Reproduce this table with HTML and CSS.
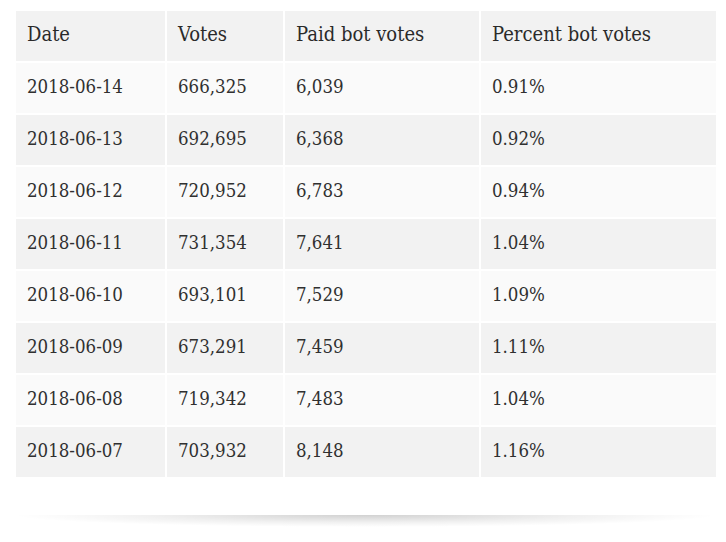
FILE: index.html
```html
<!DOCTYPE html>
<html>
<head>
<meta charset="utf-8">
<link rel="stylesheet" href="styles.css">
</head>
<body>
<div class="card">
  <table class="votes">
    <colgroup>
      <col class="c1"><col class="c2"><col class="c3"><col class="c4">
    </colgroup>
    <thead>
      <tr><th>Date</th><th>Votes</th><th>Paid bot votes</th><th>Percent bot votes</th></tr>
    </thead>
    <tbody>
      <tr><td>2018-06-14</td><td>666,325</td><td>6,039</td><td>0.91%</td></tr>
      <tr><td>2018-06-13</td><td>692,695</td><td>6,368</td><td>0.92%</td></tr>
      <tr><td>2018-06-12</td><td>720,952</td><td>6,783</td><td>0.94%</td></tr>
      <tr><td>2018-06-11</td><td>731,354</td><td>7,641</td><td>1.04%</td></tr>
      <tr><td>2018-06-10</td><td>693,101</td><td>7,529</td><td>1.09%</td></tr>
      <tr><td>2018-06-09</td><td>673,291</td><td>7,459</td><td>1.11%</td></tr>
      <tr><td>2018-06-08</td><td>719,342</td><td>7,483</td><td>1.04%</td></tr>
      <tr><td>2018-06-07</td><td>703,932</td><td>8,148</td><td>1.16%</td></tr>
    </tbody>
  </table>
</div>
<div class="shadow"></div>
</body>
</html>
```
FILE: styles.css
```css
html, body {
  margin: 0;
  padding: 0;
  background: #ffffff;
}
.card {
  padding: 9px 8px 0 14px;
  height: 515px;
  box-sizing: border-box;
}
.votes {
  border-collapse: separate;
  border-spacing: 2px;
  table-layout: fixed;
  width: 704px;
  font-family: "DejaVu Serif Condensed", "DejaVu Serif", serif;
  font-stretch: condensed;
  color: #303030;
}
.c1 { width: 149px; }
.c2 { width: 116px; }
.c3 { width: 194px; }
.c4 { width: 235px; }
.votes th, .votes td {
  height: 50px;
  padding: 0 0 4px 11px;
  text-align: left;
  vertical-align: middle;
  box-sizing: border-box;
  white-space: nowrap;
}
.votes th {
  font-size: 20px;
  font-weight: normal;
  background: #f2f2f2;
  color: #2a2a2a;
}
.votes td {
  font-size: 18.5px;
}
.votes tbody tr:nth-child(odd) td {
  background: #fafafa;
}
.votes tbody tr:nth-child(even) td {
  background: #f2f2f2;
}
.shadow {
  margin: 0 10px 0 14px;
  height: 12px;
  background: radial-gradient(ellipse 50% 100% at 50% 0%, rgba(0,0,0,0.18), rgba(0,0,0,0.06) 60%, rgba(0,0,0,0) 100%);
}
```
